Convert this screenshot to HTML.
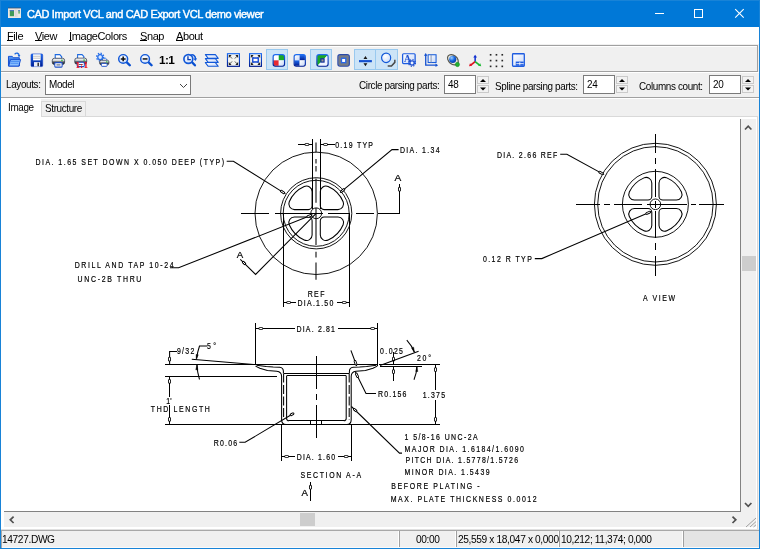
<!DOCTYPE html>
<html><head><meta charset="utf-8"><title>CAD Import VCL and CAD Export VCL demo viewer</title>
<style>
html,body{margin:0;padding:0;background:#fff;}
body{width:760px;height:549px;overflow:hidden;position:relative;font-family:"Liberation Sans",sans-serif;font-size:11px;color:#000;}
.a{position:absolute;}
.t{position:absolute;white-space:nowrap;line-height:1;}
#win{will-change:transform;left:0;top:0;width:760px;height:549px;background:#f0f0f0;}
#title{left:0;top:0;width:760px;height:27px;background:#0078d7;}
#title .t{color:#fff;font-size:11px;letter-spacing:-0.38px;-webkit-text-stroke:0.4px #fff;}
#menu{left:1px;top:27px;width:758px;height:17px;background:#fff;}
#menu .t{font-size:11px;top:4px;letter-spacing:-0.4px;}
#menu u{text-decoration:none;background:linear-gradient(#000,#000) no-repeat 0 10px/100% 1px;}
.lbl{font-size:11px;letter-spacing:-0.4px;transform:scaleX(0.9);transform-origin:0 0;}
.st{transform:scaleX(0.925);}
.edit{background:#fff;border:1px solid #7a7a7a;box-sizing:border-box;}
.ud{background:#f2f2f2;border:1px solid #cacaca;box-sizing:border-box;}
.pressed{background:#cce4f7;border:1px solid #99c9ef;box-sizing:border-box;}
</style></head><body>
<div id="win" class="a">
 <div id="title" class="a">
  <div class="t" style="left:27px;top:9px;">CAD Import VCL and CAD Export VCL demo viewer</div>
 </div>
 <div id="menu" class="a">
  <div class="t" style="left:6px;"><u>F</u>ile</div>
  <div class="t" style="left:34px;"><u>V</u>iew</div>
  <div class="t" style="left:68px;"><u>I</u>mageColors</div>
  <div class="t" style="left:139px;"><u>S</u>nap</div>
  <div class="t" style="left:175px;"><u>A</u>bout</div>
 </div>
 <!-- toolbar frame -->
 <div class="a" style="left:1px;top:45px;width:757px;height:1px;background:#a0a0a0;"></div>
 <div class="a" style="left:1px;top:46px;width:756px;height:1px;background:#fff;"></div>
 <div class="a" style="left:1px;top:71px;width:757px;height:1px;background:#a0a0a0;"></div>
 <div class="a" style="left:1px;top:72px;width:758px;height:1px;background:#fff;"></div>
 <div class="a" style="left:757px;top:45px;width:1px;height:27px;background:#a0a0a0;"></div>
 <!-- pressed buttons -->
 <div class="a pressed" style="left:266px;top:49px;width:22px;height:21px;"></div>
 <div class="a pressed" style="left:310px;top:49px;width:22px;height:21px;"></div>
 <div class="a pressed" style="left:354px;top:49px;width:22px;height:21px;"></div>
 <div class="a pressed" style="left:375px;top:49px;width:23px;height:21px;"></div>
 <!-- layouts row -->
 <div class="t lbl" style="left:6px;top:79px;">Layouts:</div>
 <div class="a edit" style="left:45px;top:75px;width:146px;height:20px;"></div>
 <div class="t lbl" style="left:49px;top:79px;">Model</div>
 <div class="t lbl" style="left:359px;top:80px;">Circle parsing parts:</div>
 <div class="a edit" style="left:444px;top:75px;width:32px;height:19px;"></div>
 <div class="t lbl" style="left:448px;top:79px;">48</div>
 <div class="a ud" style="left:477px;top:76px;width:12px;height:8px;"></div>
 <div class="a ud" style="left:477px;top:85px;width:12px;height:8px;"></div>
 <div class="t lbl" style="left:495px;top:81px;">Spline parsing parts:</div>
 <div class="a edit" style="left:583px;top:75px;width:32px;height:19px;"></div>
 <div class="t lbl" style="left:587px;top:79px;">24</div>
 <div class="a ud" style="left:616px;top:76px;width:12px;height:8px;"></div>
 <div class="a ud" style="left:616px;top:85px;width:12px;height:8px;"></div>
 <div class="t lbl" style="left:639px;top:81px;">Columns count:</div>
 <div class="a edit" style="left:709px;top:75px;width:32px;height:19px;"></div>
 <div class="t lbl" style="left:713px;top:79px;">20</div>
 <div class="a ud" style="left:742px;top:76px;width:12px;height:8px;"></div>
 <div class="a ud" style="left:742px;top:85px;width:12px;height:8px;"></div>
 <div class="a" style="left:1px;top:97px;width:758px;height:1px;background:#a0a0a0;"></div>
 <div class="a" style="left:1px;top:98px;width:758px;height:1px;background:#fff;"></div>
 <!-- tabs -->
 <div class="a" style="left:1px;top:117px;width:757px;height:413px;background:#fff;"></div>
 <div class="a" style="left:1px;top:99px;width:40px;height:20px;background:#fff;"></div>
 <div class="a" style="left:41px;top:101px;width:45px;height:16px;background:#f0f0f0;border:1px solid #d9d9d9;box-sizing:border-box;"></div>
 <div class="a" style="left:86px;top:116px;width:672px;height:1px;background:#d9d9d9;"></div>
 <div class="a" style="left:757px;top:116px;width:1px;height:413px;background:#d9d9d9;"></div>
 <div class="t lbl" style="left:8px;top:102px;">Image</div>
 <div class="t lbl" style="left:45px;top:103px;">Structure</div>
 <!-- scrollbars -->
 <div class="a" style="left:740px;top:119px;width:1px;height:393px;background:#828282;"></div>
 <div class="a" style="left:4px;top:511px;width:737px;height:1px;background:#828282;"></div>
 <div class="a" style="left:741px;top:119px;width:15px;height:408px;background:#f0f0f0;"></div>
 <div class="a" style="left:4px;top:512px;width:752px;height:15px;background:#f0f0f0;"></div>
 <div class="a" style="left:742px;top:256px;width:14px;height:15px;background:#cdcdcd;"></div>
 <div class="a" style="left:300px;top:513px;width:15px;height:13px;background:#cdcdcd;"></div>
 <!-- status bar -->
 <div class="a" style="left:1px;top:529px;width:758px;height:1px;background:#e0e0e0;"></div>
 <div class="a" style="left:1px;top:530px;width:758px;height:1px;background:#a8a8a8;"></div>
 <div class="a" style="left:1px;top:531px;width:1px;height:17px;background:#a8a8a8;"></div>
 <div class="a" style="left:683px;top:531px;width:76px;height:17px;background:#e4e4e4;"></div>
 <div class="a" style="left:398px;top:531px;width:1px;height:17px;background:#fff;"></div><div class="a" style="left:399px;top:531px;width:1px;height:17px;background:#a0a0a0;"></div>
 <div class="a" style="left:455px;top:531px;width:1px;height:17px;background:#fff;"></div><div class="a" style="left:456px;top:531px;width:1px;height:17px;background:#a0a0a0;"></div>
 <div class="a" style="left:558px;top:531px;width:1px;height:17px;background:#fff;"></div><div class="a" style="left:559px;top:531px;width:1px;height:17px;background:#a0a0a0;"></div>
 <div class="a" style="left:682px;top:531px;width:1px;height:17px;background:#fff;"></div><div class="a" style="left:683px;top:531px;width:1px;height:17px;background:#a0a0a0;"></div>
 <div class="a" style="left:2px;top:547px;width:757px;height:1px;background:#fafafa;"></div>
 <div class="t lbl st" style="left:1.5px;top:534px;">14727.DWG</div>
 <div class="t lbl st" style="left:415.5px;top:534px;">00:00</div>
 <div class="t lbl st" style="left:458px;top:534px;">25,559 x 18,047 x 0,000</div>
 <div class="t lbl st" style="left:561px;top:534px;">10,212; 11,374; 0,000</div>
</div>
<svg class="a" id="ov" style="left:0;top:0;will-change:transform" width="760" height="549" viewBox="0 0 760 549">

<defs>
<linearGradient id="gb" x1="0" y1="0" x2="0" y2="1"><stop offset="0" stop-color="#5aa0f8"/><stop offset="1" stop-color="#0a3cc0"/></linearGradient>
<linearGradient id="gb2" x1="0" y1="0" x2="0" y2="1"><stop offset="0" stop-color="#1e6cf0"/><stop offset="1" stop-color="#001c90"/></linearGradient>
<linearGradient id="gw" x1="0" y1="0" x2="1" y2="1"><stop offset="0" stop-color="#ffffff"/><stop offset="1" stop-color="#c8d8f8"/></linearGradient>
<linearGradient id="gg" x1="0" y1="0" x2="0" y2="1"><stop offset="0" stop-color="#ffffff"/><stop offset="0.35" stop-color="#d8dadc"/><stop offset="0.6" stop-color="#50545c"/><stop offset="1" stop-color="#15181f"/></linearGradient>
<radialGradient id="gs" cx="0.35" cy="0.3" r="0.8"><stop offset="0" stop-color="#a0d0ff"/><stop offset="0.5" stop-color="#1868e0"/><stop offset="1" stop-color="#0030a0"/></radialGradient>
<radialGradient id="gl" cx="0.4" cy="0.35" r="0.8"><stop offset="0" stop-color="#ffffff"/><stop offset="1" stop-color="#c4d8f8"/></radialGradient>
</defs>

<g transform="translate(6.58,50.93) scale(0.945,1.044)"><path d="M8.5 3.2c2-1.8 4.5-1.2 4.8 1.3" fill="none" stroke="#1e6ae0" stroke-width="1.3"/><path d="M11.6 3.6l3 .2-1.4 2.6z" fill="#1e6ae0"/><path d="M2 5.2h4l1 1.3h6.5v8H2z" fill="url(#gb)" stroke="#0a48d0" stroke-width="0.9" stroke-linejoin="round"/><path d="M4.2 8.3h10.6l-1.8 6.2H2.2z" fill="#8cc0ff" stroke="#0a48d0" stroke-width="0.9" stroke-linejoin="round"/><path d="M4.5 10h9M4 11.8h8.6" stroke="#3c84f0" stroke-width="0.9"/></g>
<g transform="translate(29.36,52.14) scale(0.925,0.976)"><rect x="1.8" y="1.8" width="12.6" height="13" rx="1.2" fill="url(#gb2)" stroke="#0a3cc8" stroke-width="0.6"/><rect x="4" y="2.2" width="8.2" height="6.2" fill="#fff"/><path d="M4 4.2h8.2M4 6.2h8.2" stroke="#b8b8b8" stroke-width="0.9"/><rect x="5" y="10.2" width="6.6" height="4.6" fill="#e8ecf8"/><rect x="8.8" y="10.8" width="1.5" height="3.6" fill="#202020"/></g>
<g transform="translate(51.10,52.05) scale(0.919,1.038)"><path d="M4.5 6.5V2.5h5l2 2v2z" fill="#fff" stroke="#1e6ae0" stroke-width="1.2"/><rect x="1.3" y="6" width="13.4" height="6" rx="2.2" fill="url(#gg)" stroke="#30384a" stroke-width="0.8"/><rect x="4" y="10.2" width="8" height="4.3" rx="0.8" fill="#fff" stroke="#1e50c8" stroke-width="1.1"/><rect x="5.8" y="11.9" width="4.4" height="1" fill="#505868"/><rect x="11" y="7.3" width="1.6" height="1.4" fill="#30c040"/></g>
<g transform="translate(73.62,52.12) scale(0.888,1.000)"><path d="M4.5 6.5V2.5h5l2 2v2z" fill="#fff" stroke="#1e6ae0" stroke-width="1.2"/><rect x="1.3" y="6" width="13.4" height="6" rx="2.2" fill="url(#gg)" stroke="#30384a" stroke-width="0.8"/><rect x="4" y="10.2" width="8" height="4.3" rx="0.8" fill="#fff" stroke="#1e50c8" stroke-width="1.1"/><rect x="5.8" y="11.9" width="4.4" height="1" fill="#505868"/><rect x="11" y="7.3" width="1.6" height="1.4" fill="#30c040"/><text x="1.8" y="15.8" font-family="DejaVu Serif,serif" font-weight="bold" font-size="8.2" fill="#f01020" letter-spacing="0.1">1:1</text></g>
<g transform="translate(95.33,51.76) scale(0.894,0.985)"><g transform="translate(5.4,5.4)"><circle r="2.7" fill="#d8e8ff" stroke="#2a70e8" stroke-width="1.5"/><circle r="4" fill="none" stroke="#2a70e8" stroke-width="1.4" stroke-dasharray="1.5 1.64"/></g><path d="M8 9V6.6h3.4l1.6 1.4v1z" fill="#fff" stroke="#1e6ae0" stroke-width="1"/><rect x="4.8" y="8.6" width="10.4" height="4.6" rx="1.8" fill="url(#gg)" stroke="#30384a" stroke-width="0.8"/><rect x="6.8" y="11.8" width="6.4" height="3" rx="0.8" fill="#fff" stroke="#1e50c8" stroke-width="1"/><rect x="12" y="9.6" width="1.6" height="1.2" fill="#30c040"/></g>
<g transform="translate(117.15,53.19) scale(0.972,0.926)"><path d="M9.8 9.8L13 13" stroke="#0a50d0" stroke-width="2.6" stroke-linecap="round"/><circle cx="6.2" cy="6.2" r="4.6" fill="url(#gl)" stroke="#1258d8" stroke-width="1.5"/><path d="M3.7 6.2h5M6.2 3.7v5" stroke="#101010" stroke-width="1.6"/></g>
<g transform="translate(139.17,53.19) scale(0.953,0.926)"><path d="M9.8 9.8L13 13" stroke="#0a50d0" stroke-width="2.6" stroke-linecap="round"/><circle cx="6.2" cy="6.2" r="4.6" fill="url(#gl)" stroke="#1258d8" stroke-width="1.5"/><path d="M3.7 6.2h5" stroke="#101010" stroke-width="1.6"/></g>
<g transform="translate(158.65,50.06) scale(1.095,1.033)"><text x="0.3" y="13.2" font-family="Liberation Sans,sans-serif" font-weight="bold" font-size="10.8" fill="#000" letter-spacing="-0.6">1:1</text></g>
<g transform="translate(182.16,51.96) scale(0.966,0.953)"><path d="M9.5 10L13.2 14" stroke="#0a50d0" stroke-width="2.4" stroke-linecap="round"/><circle cx="6.4" cy="7.4" r="4.6" fill="url(#gl)" stroke="#1258d8" stroke-width="1.7"/><path d="M6 4.6v3.4h3" fill="none" stroke="#0a3cb0" stroke-width="1.4"/><path d="M8.5 3.4c3-1.2 5.6.8 5.2 4.2" fill="none" stroke="#1258d8" stroke-width="1.6"/><path d="M11.6 7l2.2 2.6 1.6-3z" fill="#1258d8"/></g>
<g transform="translate(204.39,51.92) scale(0.957,1.042)"><path d="M1 10.2h10.5l3 3.6H4z" fill="url(#gw)" stroke="#1258d8" stroke-width="1.1" stroke-linejoin="round"/><path d="M1 6.4h10.5l3 3.6H4z" fill="url(#gw)" stroke="#1258d8" stroke-width="1.1" stroke-linejoin="round"/><path d="M1 2.6h10.5l3 3.6H4z" fill="url(#gw)" stroke="#1258d8" stroke-width="1.1" stroke-linejoin="round"/></g>
<g transform="translate(225.96,52.11) scale(0.936,0.986)"><rect x="1.6" y="1.6" width="12.8" height="12.8" fill="#f4f4f0" stroke="url(#gb2)" stroke-width="1.2"/><path d="M3 3h3L3 6zM13 3v3L10 3zM3 13v-3l3 3zM13 13h-3l3-3z" fill="#202020"/><path d="M4 4l2.5 2.5M12 4L9.5 6.5M4 12l2.5-2.5M12 12L9.5 9.5" stroke="#404040" stroke-width="0.9"/></g>
<g transform="translate(248.07,52.11) scale(0.929,0.986)"><rect x="1.6" y="1.6" width="12.8" height="12.8" fill="#f4f4f0" stroke="url(#gb2)" stroke-width="1.2"/><path d="M3 3h3L3 6zM13 3v3L10 3zM3 13v-3l3 3zM13 13h-3l3-3z" fill="#202020"/><path d="M4 4l2.5 2.5M12 4L9.5 6.5M4 12l2.5-2.5M12 12L9.5 9.5" stroke="#404040" stroke-width="0.9"/><rect x="5" y="6" width="6" height="4" fill="#fff" stroke="#1e50d8" stroke-width="1.6"/></g>
<g transform="translate(271.27,52.76) scale(0.891,0.905)"><rect x="2.4" y="2.4" width="6" height="6" fill="#fff"/><rect x="8.4" y="2.4" width="6" height="6" fill="#18a828"/><rect x="2.4" y="8.4" width="6" height="6" fill="#e82830"/><rect x="8.4" y="8.4" width="6" height="6" fill="url(#gw)"/><rect x="2.1" y="2.1" width="12.8" height="12.8" rx="2.4" fill="none" stroke="url(#gb2)" stroke-width="1.3"/></g>
<g transform="translate(292.29,52.76) scale(0.877,0.905)"><rect x="2.4" y="2.4" width="6" height="6" fill="url(#gw)"/><rect x="8.4" y="2.4" width="6" height="6" fill="url(#gb2)"/><rect x="2.4" y="8.4" width="6" height="6" fill="url(#gb2)"/><rect x="8.4" y="8.4" width="6" height="6" fill="url(#gw)"/><rect x="2.1" y="2.1" width="12.8" height="12.8" rx="2.4" fill="none" stroke="url(#gb2)" stroke-width="1.3"/></g>
<g transform="translate(315.04,52.76) scale(0.877,0.905)"><path d="M2.4 2.4h12.2L2.4 14.6z" fill="#18a828"/><path d="M14.6 2.4v12.2H2.4z" fill="#f0f4ff"/><rect x="6.7" y="6.7" width="3.6" height="3.6" fill="#a09888" stroke="#1030a0" stroke-width="1.3"/><rect x="2.1" y="2.1" width="12.8" height="12.8" rx="2.4" fill="none" stroke="url(#gb2)" stroke-width="1.3"/></g>
<g transform="translate(336.02,52.76) scale(0.895,0.905)"><rect x="2.4" y="2.4" width="12.2" height="12.2" rx="2" fill="#787c84"/><rect x="6.1" y="6.1" width="4.8" height="4.8" fill="#fff" stroke="#2a68e8" stroke-width="1.5"/><rect x="2.1" y="2.1" width="12.8" height="12.8" rx="2.4" fill="none" stroke="#2848a8" stroke-width="1.3"/></g>
<g transform="translate(357.47,51.01) scale(1.022,1.079)"><path d="M1.5 9.4h12.6" stroke="#1450d0" stroke-width="2"/><path d="M7.8 4.6l1.9 2.8h-3.8zM7.8 14.2l1.9-2.8h-3.8z" fill="#181818"/></g>
<g transform="translate(380.38,51.86) scale(0.990,1.029)"><circle cx="5.8" cy="5.8" r="4.6" fill="url(#gl)" stroke="#1258d8" stroke-width="1.2"/><path d="M14.6 7.6v2.6l-3.4 3.6H7.4" fill="none" stroke="#484848" stroke-width="1.5"/></g>
<g transform="translate(401.06,52.04) scale(0.964,0.944)"><rect x="1.6" y="1.8" width="13" height="10.4" rx="1" fill="url(#gw)" stroke="#1e5ce0" stroke-width="1.3"/><text x="3" y="10.6" font-family="Liberation Serif,serif" font-weight="bold" font-size="10" fill="#1e50d0">A</text><g transform="translate(11.4,11.6)"><circle r="2.2" fill="#f0f4ff" stroke="#1e50d0" stroke-width="1.3"/><circle r="3.5" fill="none" stroke="#1e50d0" stroke-width="1.3" stroke-dasharray="1.3 1.45"/></g></g>
<g transform="translate(423.31,52.52) scale(0.925,0.928)"><rect x="5.2" y="2.4" width="8.6" height="8.4" fill="url(#gw)" stroke="#1258d8" stroke-width="1.1"/><path d="M8.4 2.4v8.4" stroke="#8090b0" stroke-width="1"/><path d="M2.6 2.6v11h11.6" fill="none" stroke="#1450d0" stroke-width="1.4"/><path d="M2.6 0.6l1.9 2.8h-3.8zM16 13.6l-2.8 1.9v-3.8z" fill="#1450d0"/></g>
<g transform="translate(445.99,52.34) scale(0.910,0.947)"><ellipse cx="7.6" cy="7.8" rx="6.6" ry="4.6" transform="rotate(38 7.6 7.8)" fill="#e8e8e0" stroke="#585850" stroke-width="1.3"/><circle cx="7.4" cy="7.4" r="3.9" fill="url(#gs)"/><circle cx="12.6" cy="12.8" r="2.3" fill="#20b030" stroke="#108020" stroke-width="0.5"/></g>
<g transform="translate(468.15,54.04) scale(0.852,0.814)"><path d="M8.2 9.6V3.4" stroke="#1030d0" stroke-width="1.8"/><path d="M8.2 0.8l2.2 3.6h-4.4z" fill="#1030d0"/><path d="M8.2 9.4L3.4 13.4" stroke="#e01020" stroke-width="2"/><path d="M1 15l1.2-3.6 2.6 3z" fill="#e01020"/><path d="M8.2 9.4l4.8 4" stroke="#18b830" stroke-width="2"/><path d="M15.4 15l-1.2-3.6-2.6 3z" fill="#18b830"/></g>
<g transform="translate(489.34,51.13) scale(1.101,1.093)"><rect x="0.40" y="2.60" width="1.5" height="1.5" fill="#282828"/><rect x="0.40" y="7.90" width="1.5" height="1.5" fill="#282828"/><rect x="0.40" y="13.20" width="1.5" height="1.5" fill="#282828"/><rect x="5.70" y="2.60" width="1.5" height="1.5" fill="#282828"/><rect x="5.70" y="7.90" width="1.5" height="1.5" fill="#282828"/><rect x="5.70" y="13.20" width="1.5" height="1.5" fill="#282828"/><rect x="11.00" y="2.60" width="1.5" height="1.5" fill="#282828"/><rect x="11.00" y="7.90" width="1.5" height="1.5" fill="#282828"/><rect x="11.00" y="13.20" width="1.5" height="1.5" fill="#282828"/></g>
<g transform="translate(510.98,52.11) scale(0.919,0.986)"><rect x="1.7" y="1.7" width="12.8" height="12.6" rx="0.8" fill="url(#gw)" stroke="#1e5ce0" stroke-width="1.4"/><rect x="5.2" y="9.6" width="8.6" height="4.2" fill="#1e5ce0"/><path d="M5.8 11.7h8M9.6 10.2v3.2" stroke="#fff" stroke-width="0.9"/></g><g><rect x="8" y="8" width="13" height="10" fill="#ebe7e3"/><rect x="8" y="7.5" width="13" height="1" fill="#35506e" opacity="0.8"/><rect x="9.8" y="10" width="4.2" height="6.2" fill="#3f9a58"/><rect x="9.8" y="10" width="4.2" height="1.2" fill="#4a78b8"/><rect x="14.8" y="9.4" width="0.8" height="7.6" fill="#d0ccd4"/><rect x="16" y="9.4" width="1.6" height="7.6" fill="#dcdcdc"/><rect x="18.2" y="10" width="1.8" height="3.6" fill="#7ab87a"/><rect x="18.2" y="10" width="1.8" height="1.2" fill="#5a88c8"/></g>
<g stroke="#fff" stroke-width="1" fill="none" shape-rendering="crispEdges"><path d="M655 13.5h9"/><rect x="694.5" y="9.5" width="8" height="8"/></g>
<path d="M735.2 9.2l8.5 8.5M743.7 9.2l-8.5 8.5" stroke="#fff" stroke-width="1.1" fill="none"/>
<path d="M180 84l3.5 3.5 3.5-3.5" stroke="#444" stroke-width="1" fill="none"/>
<path d="M483.0 79l3 3h-6z" fill="#000"/>
<path d="M483.0 90.5l3-3h-6z" fill="#000"/>
<path d="M622.0 79l3 3h-6z" fill="#000"/>
<path d="M622.0 90.5l3-3h-6z" fill="#000"/>
<path d="M748.0 79l3 3h-6z" fill="#000"/>
<path d="M748.0 90.5l3-3h-6z" fill="#000"/>
<g stroke="#505050" stroke-width="1.7" fill="none"><path d="M745 129.5l3.2-3.3 3.2 3.3"/><path d="M745 503l3.2 3.3 3.2-3.3"/><path d="M735.5 516.6l-3.3 3.2 3.3 3.2" transform="translate(1468,0) scale(-1,1)"/><path d="M13.6 516.6l-3.3 3.2 3.3 3.2"/></g>
<g stroke="#a0a0a0" stroke-width="1" fill="none"><path d="M746 527l10-9M750 527l6-5.4M753.5 527l2.5-2.2"/></g>
<g id="cad" fill="none" stroke="#000" stroke-width="1.05" font-family="Liberation Sans,sans-serif">
<style>#cad .c{shape-rendering:crispEdges;stroke-width:1}#cad text{fill:#000;stroke:#000;stroke-width:0.2}#cad circle{stroke-width:0.92}#cad .af{fill:#000;stroke-width:0.5}#cad .ao{stroke-width:2.7;stroke-linecap:round}#cad .ai{stroke:#fff;stroke-width:1.0;stroke-linecap:round}</style>
<circle cx="316.2" cy="213.3" r="61.2"/>
<circle cx="316.2" cy="213.3" r="35.6"/>
<circle cx="316.2" cy="213.3" r="33.0"/>
<circle cx="316.2" cy="213.3" r="5.4"/>
<path d="M312.10 205.80L312.10 191.68A5.60 5.60 0 0 0 304.21 186.57A29.30 29.30 0 0 0 289.25 201.80A5.60 5.60 0 0 0 294.40 209.60L308.30 209.60A3.80 3.80 0 0 0 312.10 205.80Z"/>
<path d="M312.10 220.80L312.10 234.92A5.60 5.60 0 0 1 304.21 240.03A29.30 29.30 0 0 1 289.25 224.80A5.60 5.60 0 0 1 294.40 217.00L308.30 217.00A3.80 3.80 0 0 1 312.10 220.80Z"/>
<path d="M320.30 205.80L320.30 191.68A5.60 5.60 0 0 1 328.19 186.57A29.30 29.30 0 0 1 343.15 201.80A5.60 5.60 0 0 1 338.00 209.60L324.10 209.60A3.80 3.80 0 0 1 320.30 205.80Z"/>
<path d="M320.30 220.80L320.30 234.92A5.60 5.60 0 0 0 328.19 240.03A29.30 29.30 0 0 0 343.15 224.80A5.60 5.60 0 0 0 338.00 217.00L324.10 217.00A3.80 3.80 0 0 0 320.30 220.80Z"/>
<path class="c" d="M312.5 139.2V209.0"/>
<path class="c" d="M320.5 139.2V209.0"/>
<path d="M316.0 142.5L316.0 152.6"/>
<path d="M316.0 159.0L316.0 163.4"/>
<path d="M316.0 166.0L316.0 171.5"/>
<path d="M316.0 178.5L316.0 202.7"/>
<path d="M316.0 208.0L316.0 245.0"/>
<path d="M316.0 251.7L316.0 257.5"/>
<path d="M316.0 262.5L316.0 279.8"/>
<path class="c" d="M240.9 213.5H269.3"/>
<path class="c" d="M275.2 213.5H322.8"/>
<path class="c" d="M327.8 213.5H350.2"/>
<path class="c" d="M356.0 213.5H373.6"/>
<path class="c" d="M377.7 213.5H399.5"/>
<path class="c" d="M399.5 184.0V213.8"/>
<path class="ao" d="M399.5 188.2L399.5 190.3"/>
<path class="ai" d="M399.5 188.2L399.5 190.3"/>
<text transform="translate(394.6 181.2) scale(1.18 1)" textLength="5.3" lengthAdjust="spacing" font-size="8.6">A</text>
<path d="M316.2 213.3L255.6 274.4L240.3 259.3"/>
<path class="ao" d="M243.3 262.3L244.8 263.8"/>
<path class="ai" d="M243.3 262.3L244.8 263.8"/>
<text transform="translate(236.7 257.5) scale(1.12 1)" textLength="5.5" lengthAdjust="spacing" font-size="8.6">A</text>
<path class="c" d="M298.2 144.5H312.2"/>
<path class="ao" d="M308.0 144.5L305.9 144.5"/>
<path class="ai" d="M308.0 144.5L305.9 144.5"/>
<path class="c" d="M320.3 144.5H334.5"/>
<path class="ao" d="M324.5 144.5L326.6 144.5"/>
<path class="ai" d="M324.5 144.5L326.6 144.5"/>
<text transform="translate(335.2 147.6) scale(0.80 1)" textLength="47.2" lengthAdjust="spacing" font-size="8.7">0.19 TYP</text>
<path d="M398.6 149.6L392.0 149.6L340.1 192.7"/>
<path class="ao" d="M341.6 191.4L343.9 189.5"/>
<path class="ai" d="M341.6 191.4L343.9 189.5"/>
<text transform="translate(400.0 153.2) scale(0.80 1)" textLength="49.4" lengthAdjust="spacing" font-size="8.7">DIA. 1.34</text>
<text transform="translate(35.5 164.6) scale(0.80 1)" textLength="235.6" lengthAdjust="spacing" font-size="8.7">DIA. 1.65 SET DOWN X 0.050 DEEP (TYP)</text>
<path d="M226.7 161.3L233.4 161.3L285.5 193.9"/>
<path class="ao" d="M283.8 192.8L281.3 191.2"/>
<path class="ai" d="M283.8 192.8L281.3 191.2"/>
<text transform="translate(74.7 268.0) scale(0.80 1)" textLength="123.5" lengthAdjust="spacing" font-size="8.7">DRILL AND TAP 10-24</text>
<text transform="translate(77.6 281.9) scale(0.80 1)" textLength="79.7" lengthAdjust="spacing" font-size="8.7">UNC-2B THRU</text>
<path d="M170.0 267.8L178.6 267.8L312.5 214.8"/>
<path class="ao" d="M310.6 215.5L307.9 216.6"/>
<path class="ai" d="M310.6 215.5L307.9 216.6"/>
<path class="c" d="M283.5 213.4V306.9"/>
<path class="c" d="M349.5 213.4V306.9"/>
<path class="c" d="M283.4 302.5H296.0"/>
<path class="c" d="M337.0 302.5H349.5"/>
<path class="ao" d="M287.6 302.5L289.7 302.5"/>
<path class="ai" d="M287.6 302.5L289.7 302.5"/>
<path class="ao" d="M345.3 302.5L343.2 302.5"/>
<path class="ai" d="M345.3 302.5L343.2 302.5"/>
<text transform="translate(307.7 296.6) scale(0.80 1)" textLength="20.9" lengthAdjust="spacing" font-size="8.7">REF</text>
<text transform="translate(297.6 305.5) scale(0.80 1)" textLength="44.6" lengthAdjust="spacing" font-size="8.7">DIA.1.50</text>
<circle cx="655.4" cy="204.3" r="61.0"/>
<circle cx="655.4" cy="204.3" r="57.7"/>
<circle cx="655.4" cy="204.3" r="33.0"/>
<circle cx="655.4" cy="204.3" r="5.3"/>
<path d="M651.80 196.25L651.80 183.00A5.60 5.60 0 0 0 643.98 177.86A28.80 28.80 0 0 0 629.32 192.07A5.60 5.60 0 0 0 634.39 200.05L648.00 200.05A3.80 3.80 0 0 0 651.80 196.25Z"/>
<path d="M651.80 212.35L651.80 225.60A5.60 5.60 0 0 1 643.98 230.74A28.80 28.80 0 0 1 629.32 216.53A5.60 5.60 0 0 1 634.39 208.55L648.00 208.55A3.80 3.80 0 0 1 651.80 212.35Z"/>
<path d="M659.00 196.25L659.00 183.00A5.60 5.60 0 0 1 666.82 177.86A28.80 28.80 0 0 1 681.48 192.07A5.60 5.60 0 0 1 676.41 200.05L662.80 200.05A3.80 3.80 0 0 1 659.00 196.25Z"/>
<path d="M659.00 212.35L659.00 225.60A5.60 5.60 0 0 0 666.82 230.74A28.80 28.80 0 0 0 681.48 216.53A5.60 5.60 0 0 0 676.41 208.55L662.80 208.55A3.80 3.80 0 0 0 659.00 212.35Z"/>
<path class="c" d="M655.5 134.2V152.6"/>
<path class="c" d="M655.5 157.6V164.3"/>
<path class="c" d="M655.5 169.3V196.8"/>
<path class="c" d="M655.5 200.5V208.2"/>
<path class="c" d="M655.5 211.4V238.0"/>
<path class="c" d="M655.5 243.2V249.5"/>
<path class="c" d="M655.5 255.8V275.7"/>
<path class="c" d="M576.4 204.5H600.1"/>
<path class="c" d="M604.3 204.5H610.1"/>
<path class="c" d="M613.8 204.5H642.1"/>
<path class="c" d="M647.3 204.5H687.4"/>
<path class="c" d="M691.0 204.5H696.4"/>
<path class="c" d="M699.3 204.5H724.0"/>
<text transform="translate(496.9 157.7) scale(0.80 1)" textLength="75.5" lengthAdjust="spacing" font-size="8.7">DIA. 2.66 REF</text>
<path d="M560.2 154.2L566.9 154.2L604.1 174.6"/>
<path class="ao" d="M602.3 173.6L599.7 172.2"/>
<path class="ai" d="M602.3 173.6L599.7 172.2"/>
<text transform="translate(482.9 261.8) scale(0.80 1)" textLength="61.2" lengthAdjust="spacing" font-size="8.7">0.12 R TYP</text>
<path d="M534.8 258.6L541.8 258.6L651.4 211.4"/>
<path class="ao" d="M649.6 212.2L646.8 213.4"/>
<path class="ai" d="M649.6 212.2L646.8 213.4"/>
<text transform="translate(643.0 300.6) scale(0.80 1)" textLength="40.0" lengthAdjust="spacing" font-size="8.7">A VIEW</text>
<path class="c" d="M255.5 322.7V365.4"/>
<path class="c" d="M377.5 322.7V366.0"/>
<path class="c" d="M255.6 328.5H294.8"/>
<path class="c" d="M337.8 328.5H377.9"/>
<path class="ao" d="M259.8 328.5L261.9 328.5"/>
<path class="ai" d="M259.8 328.5L261.9 328.5"/>
<path class="ao" d="M373.7 328.5L371.6 328.5"/>
<path class="ai" d="M373.7 328.5L371.6 328.5"/>
<text transform="translate(296.5 332.2) scale(0.80 1)" textLength="48.1" lengthAdjust="spacing" font-size="8.7">DIA. 2.81</text>
<path class="c" d="M165.4 364.5H377.9"/>
<path class="c" d="M379.3 364.5H440.0"/>
<path class="c" d="M165.4 376.5H277.0"/>
<path class="c" d="M165.4 424.5H440.0"/>
<path class="c" d="M380.0 366.5H421.6"/>
<path d="M177.0 351.4L169.6 351.4L169.6 364.4"/>
<path class="ao" d="M169.5 360.2L169.5 358.1"/>
<path class="ai" d="M169.5 360.2L169.5 358.1"/>
<path class="c" d="M169.5 376.1V397.0"/>
<path class="c" d="M169.5 405.0V424.6"/>
<path class="ao" d="M169.5 380.3L169.5 382.4"/>
<path class="ai" d="M169.5 380.3L169.5 382.4"/>
<path class="ao" d="M169.5 420.4L169.5 418.3"/>
<path class="ai" d="M169.5 420.4L169.5 418.3"/>
<text transform="translate(177.0 354.0) scale(0.80 1)" textLength="21.6" lengthAdjust="spacing" font-size="8.7">9/32</text>
<text transform="translate(207.0 349.0) scale(0.80 1)" textLength="11.2" lengthAdjust="spacing" font-size="8.7">5°</text>
<text transform="translate(166.2 403.8) scale(0.80 1)" textLength="6.9" lengthAdjust="spacing" font-size="8.7">1'</text>
<text transform="translate(150.8 411.6) scale(0.80 1)" textLength="73.8" lengthAdjust="spacing" font-size="8.7">THD LENGTH</text>
<path d="M191.8 359.2L253.6 364.4"/>
<path d="M207 346H199.5Q197.5 352 196.5 358.5"/>
<path class="af" d="M196.3 359.6L196.2 354.5L198.2 354.8Z"/>
<path d="M197 365Q197.2 372 199.5 379.5"/>
<path class="af" d="M197.0 364.8L197.8 369.8L195.8 369.8Z"/>
<path d="M255.5 366.1L259.8 368.2L267.4 370.5L276.8 371.3Q281.6 371.8 281.6 376.5V419.8Q281.6 424.4 286.0 424.6"/>
<path d="M256.5 365.2L266.2 366.4L273.2 367L279.6 367.3Q283.4 367.6 283.4 371.6V373.4"/>
<path d="M283.6 373.4V420" stroke-dasharray="9 2.5"/>
<path d="M286.6 375.4V418.5Q286.6 420.8 289.0 420.8"/>
<path class="c" d="M281.5 424.6V461.0"/>
<path d="M377.3 366.1L373.0 368.2L365.4 370.5L356.0 371.3Q351.2 371.8 351.2 376.5V419.8Q351.2 424.4 346.8 424.6"/>
<path d="M376.3 365.2L366.6 366.4L359.6 367L353.2 367.3Q349.4 367.6 349.4 371.6V373.4"/>
<path d="M349.2 373.4V420" stroke-dasharray="9 2.5"/>
<path d="M346.2 375.4V418.5Q346.2 420.8 343.8 420.8"/>
<path class="c" d="M351.5 424.6V461.0"/>
<path class="c" d="M283.8 373.5H349.0"/>
<path class="c" d="M286.6 375.5H346.2"/>
<path class="c" d="M289.0 420.5H343.8"/>
<path class="c" d="M310.5 420.8V424.6"/>
<path class="c" d="M321.5 420.8V424.6"/>
<path class="c" d="M316.5 355.7V388.5"/>
<path class="c" d="M316.5 394.2V400.0"/>
<path class="c" d="M316.5 405.0V438.0"/>
<path class="c" d="M281.4 456.5H295.3"/>
<path class="c" d="M337.6 456.5H351.4"/>
<path class="ao" d="M285.6 456.5L287.7 456.5"/>
<path class="ai" d="M285.6 456.5L287.7 456.5"/>
<path class="ao" d="M347.2 456.5L345.1 456.5"/>
<path class="ai" d="M347.2 456.5L345.1 456.5"/>
<text transform="translate(296.7 460.4) scale(0.80 1)" textLength="48.0" lengthAdjust="spacing" font-size="8.7">DIA. 1.60</text>
<text transform="translate(300.4 477.5) scale(0.80 1)" textLength="75.8" lengthAdjust="spacing" font-size="8.7">SECTION A-A</text>
<text transform="translate(301.6 495.6) scale(1.12 1)" textLength="5.5" lengthAdjust="spacing" font-size="8.6">A</text>
<path class="c" d="M310.5 482.0V500.6"/>
<path class="ao" d="M310.5 486.2L310.5 488.3"/>
<path class="ai" d="M310.5 486.2L310.5 488.3"/>
<text transform="translate(213.7 446.0) scale(0.80 1)" textLength="29.2" lengthAdjust="spacing" font-size="8.7">R0.06</text>
<path d="M239.3 442.3L245.1 442.3L294.2 413.0"/>
<path class="ao" d="M291.1 414.8L292.9 413.8"/>
<path class="ai" d="M291.1 414.8L292.9 413.8"/>
<text transform="translate(378.1 396.6) scale(0.80 1)" textLength="35.4" lengthAdjust="spacing" font-size="8.7">R0.156</text>
<path d="M376.0 393.5L366.0 393.5L355.4 372.1"/>
<path class="ao" d="M356.3 373.9L357.6 376.6"/>
<path class="ai" d="M356.3 373.9L357.6 376.6"/>
<path d="M350.9 350.4L356.7 366.0"/>
<path class="ao" d="M356.0 364.1L355.0 361.3"/>
<path class="ai" d="M356.0 364.1L355.0 361.3"/>
<text transform="translate(380.1 353.6) scale(0.80 1)" textLength="28.6" lengthAdjust="spacing" font-size="8.7">0.025</text>
<path class="c" d="M393.5 351.7V364.4"/>
<path class="c" d="M393.5 366.4V380.5"/>
<path class="ao" d="M393.5 360.2L393.5 358.1"/>
<path class="ai" d="M393.5 360.2L393.5 358.1"/>
<path class="ao" d="M393.5 370.6L393.5 372.7"/>
<path class="ai" d="M393.5 370.6L393.5 372.7"/>
<path d="M380.0 365.5L418.6 351.2"/>
<text transform="translate(416.9 361.0) scale(0.80 1)" textLength="17.7" lengthAdjust="spacing" font-size="8.7">20°</text>
<path d="M406.8 340.1A36.9 36.9 0 0 1 414.4 352.3"/>
<path class="af" d="M414.4 352.3L411.7 348.0L413.6 347.2Z"/>
<path d="M416.9 366.5A36.9 36.9 0 0 1 414.0 379.8"/>
<path class="af" d="M416.9 366.5L417.8 371.5L415.8 371.4Z"/>
<path class="c" d="M435.5 364.4V390.0"/>
<path class="c" d="M435.5 399.5V424.6"/>
<path class="ao" d="M435.5 368.6L435.5 370.7"/>
<path class="ai" d="M435.5 368.6L435.5 370.7"/>
<path class="ao" d="M435.5 420.4L435.5 418.3"/>
<path class="ai" d="M435.5 420.4L435.5 418.3"/>
<text transform="translate(422.7 398.3) scale(0.80 1)" textLength="27.9" lengthAdjust="spacing" font-size="8.7">1.375</text>
<path d="M351.4 406.5L399.5 453.1L402.0 453.1"/>
<path class="ao" d="M354.4 409.4L356.0 410.8"/>
<path class="ai" d="M354.4 409.4L356.0 410.8"/>
<text transform="translate(404.6 439.6) scale(0.80 1)" textLength="91.2" lengthAdjust="spacing" font-size="8.7">1 5/8-16 UNC-2A</text>
<text transform="translate(404.6 451.8) scale(0.80 1)" textLength="149.2" lengthAdjust="spacing" font-size="8.7">MAJOR DIA. 1.6184/1.6090</text>
<text transform="translate(405.6 463.3) scale(0.80 1)" textLength="140.5" lengthAdjust="spacing" font-size="8.7">PITCH DIA. 1.5778/1.5726</text>
<text transform="translate(404.6 474.9) scale(0.80 1)" textLength="106.2" lengthAdjust="spacing" font-size="8.7">MINOR DIA. 1.5439</text>
<text transform="translate(391.3 489.0) scale(0.80 1)" textLength="110.5" lengthAdjust="spacing" font-size="8.7">BEFORE PLATING -</text>
<text transform="translate(390.7 501.6) scale(0.80 1)" textLength="182.4" lengthAdjust="spacing" font-size="8.7">MAX. PLATE THICKNESS 0.0012</text>
</g>
</svg>
<div class="a" style="left:0;top:0;width:1px;height:549px;background:#1883d7;"></div>
<div class="a" style="left:759px;top:0;width:1px;height:549px;background:#1883d7;"></div>
<div class="a" style="left:0;top:548px;width:760px;height:1px;background:#1883d7;"></div>
<div class="a" style="left:0;top:0;width:760px;height:1px;background:#1883d7;"></div>
</body></html>
